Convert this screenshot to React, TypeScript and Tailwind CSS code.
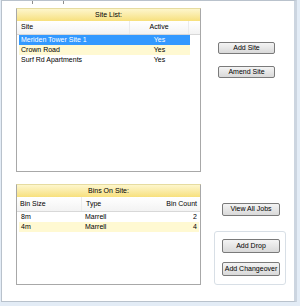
const sites = [
  { name: "Meriden Tower Site 1", active: "Yes", state: "selected" },
  { name: "Crown Road", active: "Yes", state: "alt" },
  { name: "Surf Rd Apartments", active: "Yes", state: "" },
];

const bins = [
  { size: "8m", type: "Marrell", count: 2, alt: false },
  { size: "4m", type: "Marrell", count: 4, alt: true },
];

function Btn({ label, className }: { label: string; className: string }) {
  return (
    <div
      className={`flex items-center justify-center rounded-[2px] border border-[#7a7a7a] bg-gradient-to-b from-[#f4f4f4] to-[#d9d9d9] text-[7px] text-black ${className}`}
    >
      {label}
    </div>
  );
}

function PanelHeader({ title }: { title: string }) {
  return (
    <div className="h-[12px] flex items-center justify-center bg-gradient-to-b from-[#fdf6cc] to-[#f7e07c] text-[7px] text-black">
      {title}
    </div>
  );
}

export default function App() {
  return (
    <div className="w-[300px] h-[306px] bg-[#e3ecf6] font-['Liberation_Sans',Arial,sans-serif] text-black overflow-hidden">
      <div className="ml-[1px] w-[296px] h-[302px] border border-[#b9c2cc] border-r-[3px] border-r-[#ccd5e0] bg-white flex">
        {/* left column */}
        <div className="w-[199px] flex flex-col">
          <div className="h-[3px] flex">
            <div className="w-[31px] border-r border-[#8d8d8d]" />
            <div className="w-[31px] border-r border-[#8d8d8d]" />
          </div>

          {/* Site list */}
          <div className="ml-[14px] mt-[4px] w-[185px] h-[164px] border border-[#a8a8a8] border-t-[#e6dca0] bg-white flex flex-col">
            <PanelHeader title="Site List:" />
            <div className="h-[14px] flex border-b border-[#d8d8d8] bg-gradient-to-b from-white to-[#f3f3f3] text-[7px] px-[2px]">
              <div className="w-[111px] flex items-center pl-[2px] border-r border-[#ebebeb]">Site</div>
              <div className="w-[59px] flex items-center justify-center border-r border-[#ebebeb]">Active</div>
            </div>
            <div className="flex flex-col px-[2px]">
              {sites.map((s) => (
                <div
                  key={s.name}
                  className={`w-[171px] h-[10px] flex items-center text-[7px] ${
                    s.state === "selected"
                      ? "bg-[#3399ff] text-white"
                      : s.state === "alt"
                      ? "bg-[#fff9d2] text-black"
                      : "text-black"
                  }`}
                >
                  <div className="w-[111px] pl-[2px]">{s.name}</div>
                  <div className="w-[59px] text-center">{s.active}</div>
                </div>
              ))}
            </div>
          </div>

          {/* Bins on site */}
          <div className="ml-[14px] mt-[12px] w-[185px] h-[101px] border border-[#a8a8a8] border-t-[#e6dca0] bg-white flex flex-col">
            <PanelHeader title="Bins On Site:" />
            <div className="h-[15px] flex border-b border-[#d8d8d8] bg-gradient-to-b from-white to-[#f3f3f3] text-[7px] px-[2px]">
              <div className="w-[63px] flex items-center pl-[1px] border-r border-[#ebebeb]">Bin Size</div>
              <div className="w-[66px] flex items-center pl-[4px]">Type</div>
              <div className="flex-1 flex items-center justify-end pr-[1px]">Bin Count</div>
            </div>
            <div className="flex flex-col pl-[2px] pr-[1px]">
              {bins.map((b) => (
                <div
                  key={b.size}
                  className={`h-[10px] flex items-center text-[7px] text-black ${b.alt ? "bg-[#fff9d2]" : ""}`}
                >
                  <div className="w-[66px] pl-[2px]">{b.size}</div>
                  <div className="w-[66px]">{b.type}</div>
                  <div className="flex-1 text-right pr-[2px]">{b.count}</div>
                </div>
              ))}
            </div>
          </div>
        </div>

        {/* right column */}
        <div className="flex-1 flex flex-col">
          <Btn label="Add Site" className="ml-[17px] mt-[41px] w-[57px] h-[12px]" />
          <Btn label="Amend Site" className="ml-[17px] mt-[12px] w-[57px] h-[12px]" />
          <Btn label="View All Jobs" className="ml-[21px] mt-[125px] w-[58px] h-[13px]" />
          <div className="ml-[13px] mt-[15px] w-[72px] h-[54px] rounded-[3px] border border-[#d8dfe6] flex flex-col">
            <Btn label="Add Drop" className="ml-[7px] mt-[7px] w-[58px] h-[14px]" />
            <Btn label="Add Changeover" className="ml-[7px] mt-[9px] w-[58px] h-[14px]" />
          </div>
        </div>
      </div>
    </div>
  );
}
